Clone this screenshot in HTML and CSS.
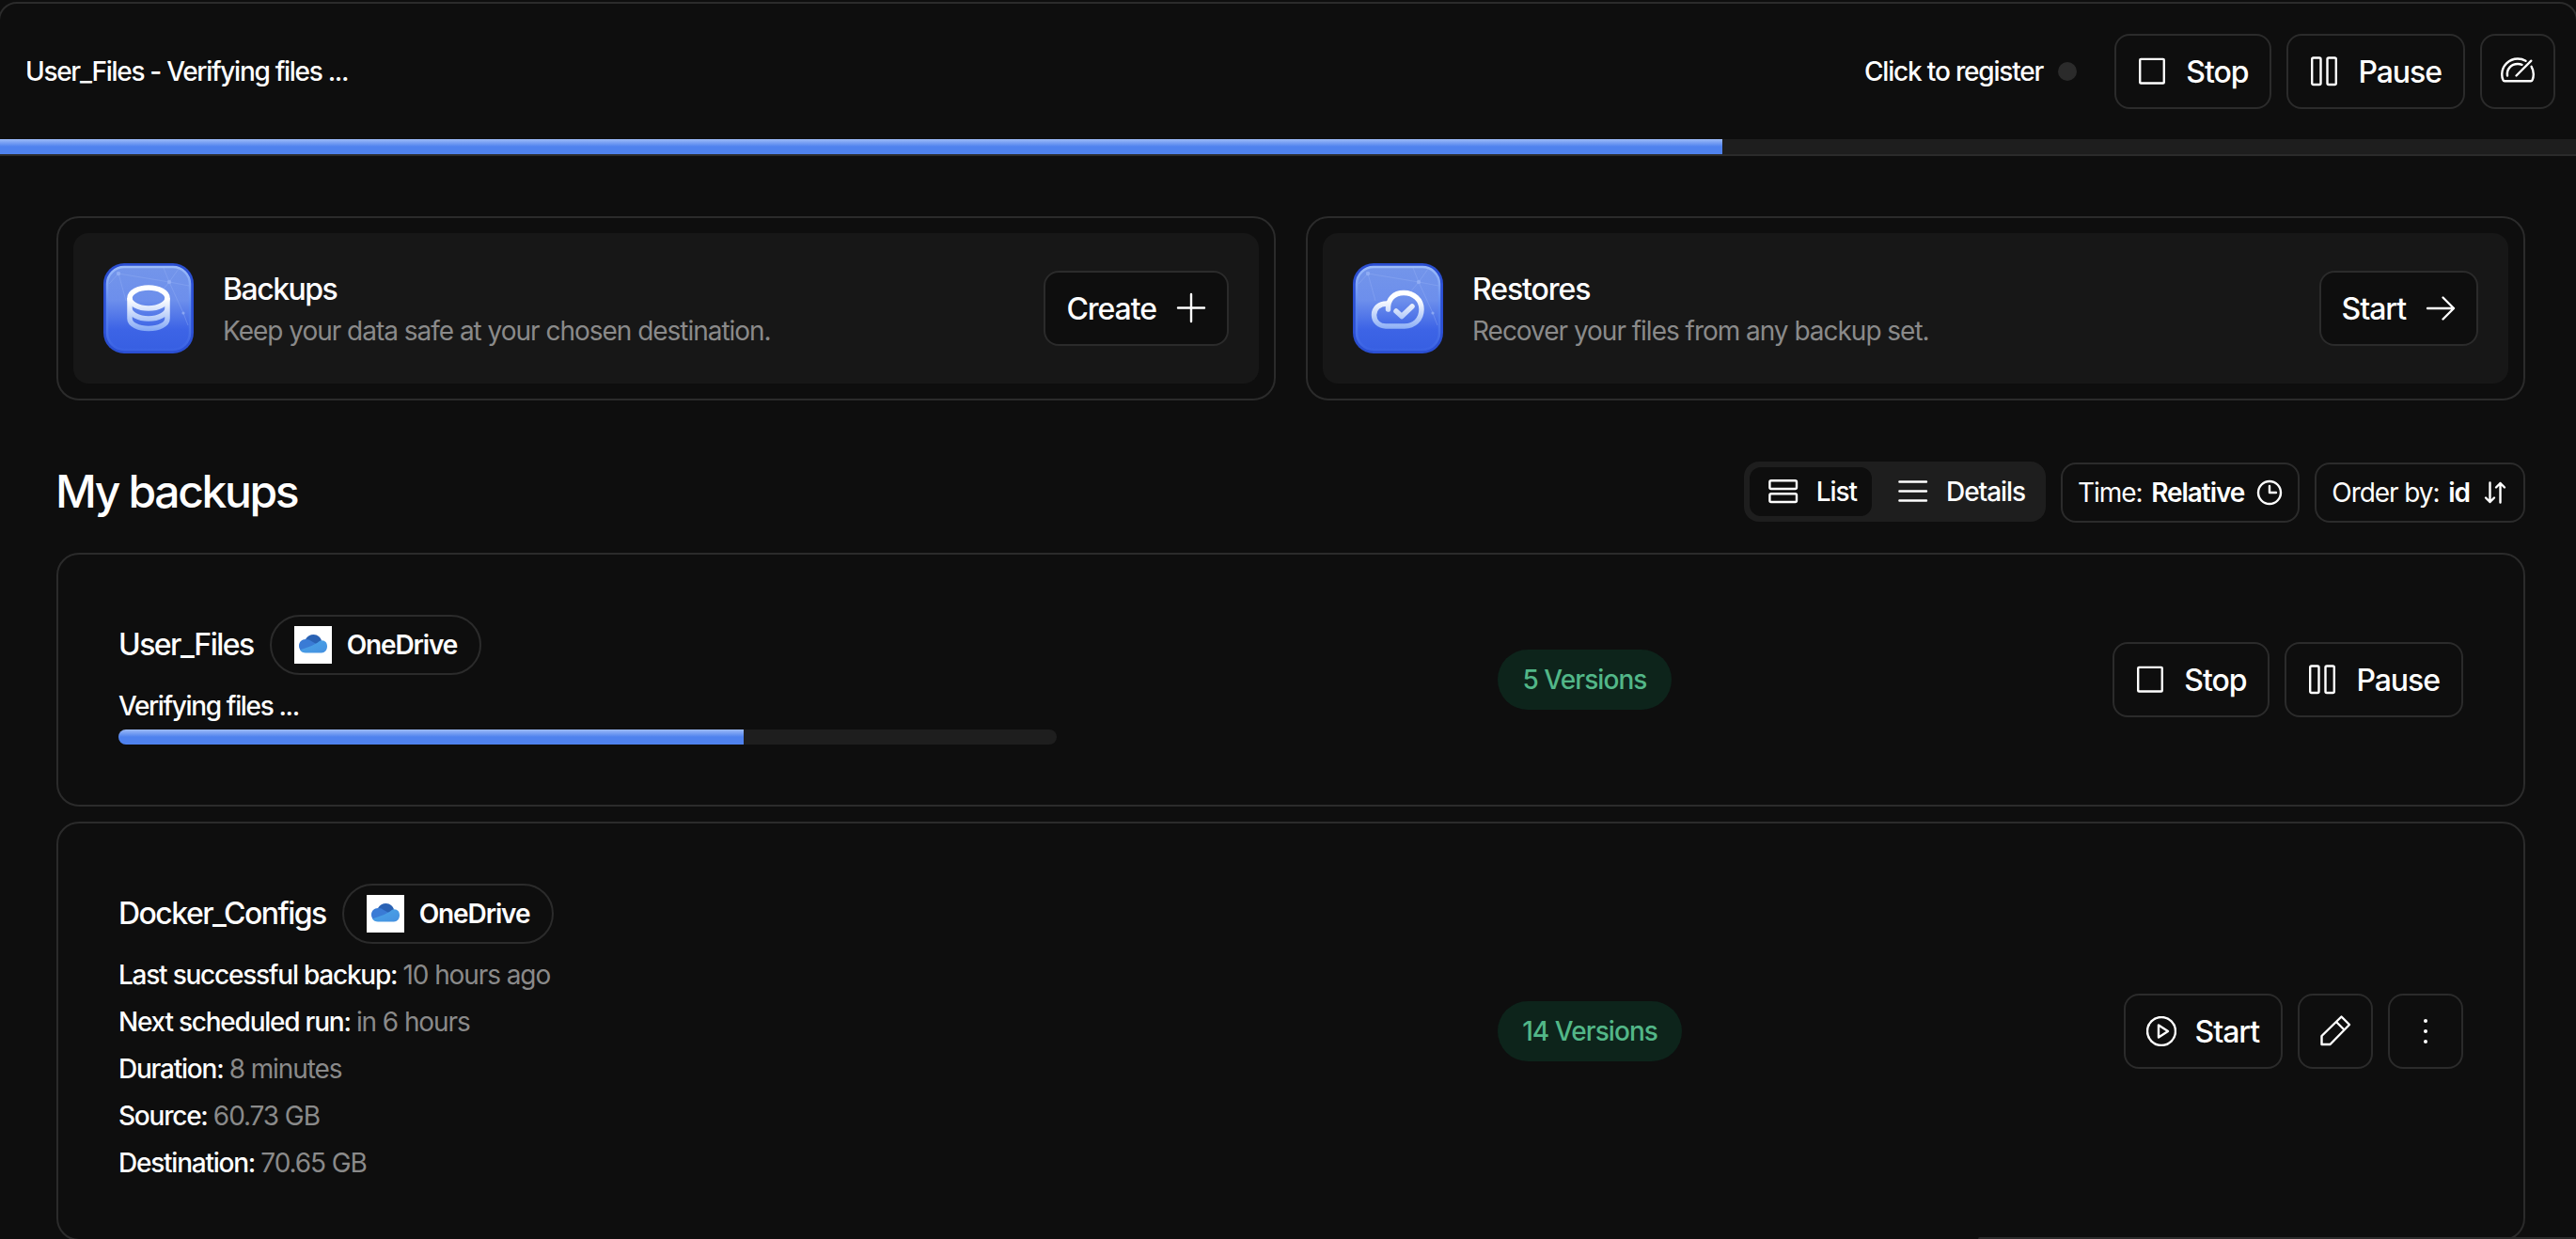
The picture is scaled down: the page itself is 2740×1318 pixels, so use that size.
FILE: index.html
```html
<!DOCTYPE html>
<html lang="en">

<head>
    <meta charset="utf-8">
    <title>Duplicati</title>
    <meta name="viewport" content="width=device-width, initial-scale=1">
    <link rel="stylesheet" href="styles.css">
</head>

<body>
    <!-- shared icons -->
    <svg class="sprite" width="0" height="0">
        <defs>
            <linearGradient id="tileBg" x1="0" y1="0" x2="0" y2="1">
                <stop offset="0" stop-color="#7395ea"/>
                <stop offset="0.4" stop-color="#6d8fec"/>
                <stop offset="0.75" stop-color="#3d64e6"/>
                <stop offset="1" stop-color="#375fe2"/>
            </linearGradient>
            <linearGradient id="tileRim" x1="0" y1="0" x2="0" y2="1">
                <stop offset="0" stop-color="#9cbcfa"/>
                <stop offset="0.5" stop-color="#5c86f0"/>
                <stop offset="1" stop-color="#3a62e4"/>
            </linearGradient>
            <linearGradient id="glyph" gradientUnits="userSpaceOnUse" x1="0" y1="30" x2="0" y2="72">
                <stop offset="0.2" stop-color="#fff"/>
                <stop offset="1" stop-color="#83a8f5"/>
            </linearGradient>
            <linearGradient id="odBase" x1="0" y1="0" x2="1" y2="1">
                <stop offset="0" stop-color="#4aa6e8"/>
                <stop offset="1" stop-color="#4590e0"/>
            </linearGradient>
        </defs>
        <symbol id="i-stop" viewBox="0 0 32 32">
            <rect x="3.200" y="2.900" width="25.600" height="25.600" rx="1"/>
        </symbol>
        <symbol id="i-pause" viewBox="0 0 32 32">
            <rect x="3.200" y="1.500" width="9.300" height="28.500" rx="1.500"/>
            <rect x="19.500" y="1.500" width="9.300" height="28.500" rx="1.500"/>
        </symbol>
        <symbol id="i-play" viewBox="0 0 32 32">
            <circle cx="16" cy="16" r="15"/>
            <path d="M13 9.500v13l10-6.500z"/>
        </symbol>
        <symbol id="tile" viewBox="0 0 96 96">
            <rect x="0" y="0" width="96" height="96" rx="22" fill="#2b4fd2"/>
            <rect x="4" y="4" width="88" height="88" rx="18" fill="url(#tileBg)" stroke="url(#tileRim)" stroke-width="2.500"/>
            <path d="M16 11L70 20L91 24M16 11L6 22M16 11L24 40M64 5L70 20L80 6M70 20L60 32M70 20L85 53L90 66" fill="none" stroke="#9ab5f7" stroke-width="1" opacity="0.35"/>
            <g fill="#9ab5f7" opacity="0.7">
                <circle cx="16" cy="11" r="2.200"/>
                <circle cx="70" cy="20" r="2.200"/>
                <circle cx="85" cy="53" r="1.600"/>
            </g>
        </symbol>
        <symbol id="onedrive" viewBox="0 0 40 40">
            <rect width="40" height="40" fill="#fff"/>
            <path d="M12 14C14 10.500 17 9 20.500 9C25 9 28 12 29 15.500L20 22z" fill="#2a62b4"/>
            <path d="M12 28C8 28 5 25 5 21C5 17 8 14 12 14C15 13.500 17 15 19 16.500L27 21L10 28z" fill="#3a7bd5"/>
            <path d="M18.500 21L25 17.500C26.500 16 28 15.300 29.500 15.300C33 15.500 35 18 35 21.500C35 25.500 32.500 28.500 29 28.500H12C9.500 28.500 7.500 27.500 6 25.500z" fill="url(#odBase)"/>
        </symbol>
    </svg>

    <header class="status-bar">
        <div class="status-row">
            <span class="status-text">User_Files - Verifying files ...</span>
            <div class="status-actions">
                <a class="register">Click to register <span class="dot"></span></a>
                <button class="btn"><svg class="icon"><use href="#i-stop"/></svg>Stop</button>
                <button class="btn"><svg class="icon"><use href="#i-pause"/></svg>Pause</button>
                <button class="btn btn-icon">
                    <svg class="icon gauge" viewBox="0 0 36 32"><path d="M26.500 4.800C24 3.300 21.200 2.500 18 2.500C8.700 2.500 1.200 10 1.200 19C1.200 21.300 1.700 23.600 2.500 25.300C2.800 26 3.300 26.200 4 26.200H32C32.700 26.200 33.200 26 33.500 25.300C34.300 23.600 34.800 21.300 34.800 19C34.800 16 34 13.200 32.600 10.800M7 20.500C6 13.500 11 8 18 8C19.700 8 21.200 8.300 22.500 8.800M16.500 20.500L32.300 4.700"/></svg>
                </button>
            </div>
        </div>
        <div class="progress">
            <div class="progress-fill" style="width: 66.87%"></div>
        </div>
    </header>

    <main>
        <section class="actions">
            <div class="action-card">
                <div class="action-inner">
                    <svg class="tile" viewBox="0 0 96 96">
                        <use href="#tile"/>
                        <g fill="none" stroke="url(#glyph)" stroke-width="5.500">
                            <ellipse cx="48" cy="37" rx="20" ry="11"/>
                            <path d="M28 37V59C28 65 37 69.500 48 69.500S68 65 68 59V37M28 48C28 54 37 59 48 59S68 54 68 48"/>
                        </g>
                    </svg>
                    <div class="action-text">
                        <h3>Backups</h3>
                        <p>Keep your data safe at your chosen destination.</p>
                    </div>
                    <button class="btn">Create<svg class="icon plus" viewBox="0 0 32 32"><path d="M17 1v29M3 15.500h28"/></svg></button>
                </div>
            </div>
            <div class="action-card">
                <div class="action-inner">
                    <svg class="tile" viewBox="0 0 96 96">
                        <use href="#tile"/>
                        <g fill="none" stroke="url(#glyph)" stroke-width="5.500" stroke-linecap="round" stroke-linejoin="round">
                            <path d="M37.500 49C37 38 44 31.500 54 31.500C65 31.500 73 39 73 49C73 60 65 67 55 67H35C28 67 22.500 62 22.500 55C22.500 48 28 43 36 43"/>
                            <path d="M46 51L52 56.500L63 46"/>
                        </g>
                    </svg>
                    <div class="action-text">
                        <h3 class="restores">Restores</h3>
                        <p>Recover your files from any backup set.</p>
                    </div>
                    <button class="btn">Start<svg class="icon arrow" viewBox="0 0 32 32"><path d="M3 16h28M19.500 4.500L31 16L19.500 27.500"/></svg></button>
                </div>
            </div>
        </section>

        <div class="list-header">
            <h1>My backups</h1>
            <div class="controls">
                <div class="segmented">
                    <button class="segment active"><svg class="icon" viewBox="0 0 32 32"><rect x="1.400" y="4.200" width="28.600" height="8.800" rx="1.500"/><rect x="1.400" y="18.200" width="28.600" height="8.800" rx="1.500"/></svg>List</button>
                    <button class="segment"><svg class="icon" viewBox="0 0 32 32"><path d="M1.400 5.500h28.600M1.400 15.500h28.600M1.400 25.500h28.600"/></svg>Details</button>
                </div>
                <button class="chip">Time: <b>Relative</b><svg class="icon clock" viewBox="0 0 28 28"><circle cx="14" cy="14" r="12"/><path d="M14 7v7h7"/></svg></button>
                <button class="chip">Order by: <b>id</b><svg class="icon sort" viewBox="0 0 24 24"><path d="M6.500 1.500v20.500M2 17.500l4.500 4.500l4.500-4.500M17.500 22.500V2M13 6.500l4.500-4.500l4.500 4.500"/></svg></button>
            </div>
        </div>

        <section class="backups">
            <article class="backup">
                <div class="backup-info">
                    <div class="backup-title">
                        <h2>User_Files</h2>
                        <span class="target"><svg class="logo"><use href="#onedrive"/></svg>OneDrive</span>
                    </div>
                    <div class="running">
                        <span>Verifying files ...</span>
                        <div class="progress">
                            <div class="progress-fill" style="width: 66.7%"></div>
                        </div>
                    </div>
                </div>
                <span class="versions">5 Versions</span>
                <div class="backup-actions">
                    <button class="btn"><svg class="icon"><use href="#i-stop"/></svg>Stop</button>
                    <button class="btn"><svg class="icon"><use href="#i-pause"/></svg>Pause</button>
                </div>
            </article>

            <article class="backup">
                <div class="backup-info">
                    <div class="backup-title">
                        <h2>Docker_Configs</h2>
                        <span class="target"><svg class="logo"><use href="#onedrive"/></svg>OneDrive</span>
                    </div>
                    <div>Last successful backup: <span class="muted">10 hours ago</span></div>
                    <div>Next scheduled run: <span class="muted">in 6 hours</span></div>
                    <div>Duration: <span class="muted">8 minutes</span></div>
                    <div>Source: <span class="muted">60.73 GB</span></div>
                    <div>Destination: <span class="muted">70.65 GB</span></div>
                </div>
                <span class="versions">14 Versions</span>
                <div class="backup-actions">
                    <button class="btn"><svg class="icon"><use href="#i-play"/></svg>Start</button>
                    <button class="btn btn-icon">
                        <svg class="icon" viewBox="0 0 32 32"><path d="M1.500 30v-9L22.500 0.500L31 9L10.500 30zM17 6L25.500 14.500"/></svg>
                    </button>
                    <button class="btn btn-icon">
                        <svg class="icon dots" viewBox="0 0 32 32"><circle cx="16" cy="5" r="2"/><circle cx="16" cy="16" r="2"/><circle cx="16" cy="27" r="2"/></svg>
                    </button>
                </div>
            </article>
        </section>
    </main>

    <div class="toast"></div>
</body>

</html>
```

FILE: styles.css
```css
* {
    box-sizing: border-box;
}

body {
    position: relative;
    margin: 0;
    padding-top: 2px;
    height: 1318px;
    overflow: hidden;
    background-color: #0e0e0e;
    color: #fff;
    font-family: Inter, "Liberation Sans", sans-serif;
    font-size: 28px;
    line-height: 34px;
    letter-spacing: -0.044em;
}

h1,
h2,
h3,
p {
    margin: 0;
    font-weight: 500;
}

button {
    font: inherit;
    letter-spacing: inherit;
    color: inherit;
    background: none;
    border: none;
    padding: 0;
    cursor: pointer;
}

.sprite {
    position: absolute;
}

.icon {
    width: 32px;
    height: 32px;
    flex-shrink: 0;
    overflow: visible;
    fill: none;
    stroke: #fff;
    stroke-width: 2.4;
    stroke-linejoin: round;
    stroke-linecap: round;
}

.btn {
    display: flex;
    align-items: center;
    gap: 20px;
    height: 80px;
    padding: 2px 23px 0 22px;
    border: 2px solid #2b2b2b;
    border-radius: 16px;
    background-color: #0e0e0e;
    font-size: 32px;
    font-weight: 500;
    letter-spacing: -0.033em;
    white-space: nowrap;
}

.btn .icon {
    margin-top: -2px;
}

.btn-icon {
    width: 80px;
    padding: 2px 0 0;
    justify-content: center;
}

.btn .gauge {
    width: 36px;
}

.muted {
    color: #8a8a8a;
}

/* Top status bar */

.status-bar {
    margin: 0 -2px;
    border: 2px solid #2b2b2b;
    border-radius: 20px 20px 0 0;
}

.status-row {
    display: flex;
    align-items: center;
    justify-content: space-between;
    padding: 32px 22px 32px 27px;
}

.status-text,
.register {
    font-weight: 500;
}

.status-text {
    letter-spacing: -0.0463em;
}

.status-actions {
    display: flex;
    align-items: center;
    gap: 16px;
}

.register {
    display: flex;
    align-items: center;
    gap: 16px;
    margin-right: 24px;
    letter-spacing: -0.042em;
}

.dot {
    width: 20px;
    height: 20px;
    border-radius: 50%;
    background-color: #2b2b2b;
}

.progress {
    height: 16px;
    border-radius: 8px;
    overflow: hidden;
    background-color: #1e1e1e;
}

.status-bar .progress {
    border-radius: 0;
}

.progress-fill {
    height: 100%;
    background: linear-gradient(#9dbbf8, #4f82ee 50%);
}

/* Backup / restore cards */

main {
    padding: 64px 54px 0 60px;
}

.actions {
    display: grid;
    grid-template-columns: 1fr 1fr;
    gap: 32px;
}

.action-card {
    padding: 16px;
    border: 2px solid #2b2b2b;
    border-radius: 24px;
}

.action-inner {
    display: flex;
    align-items: center;
    height: 160px;
    padding: 0 32px;
    border-radius: 16px;
    background-color: #171717;
}

.tile {
    width: 96px;
    height: 96px;
    margin-right: 31px;
}

.action-text {
    flex-grow: 1;
}

.action-text h3 {
    padding-top: 1px;
    font-size: 32px;
    line-height: 40px;
    letter-spacing: -0.0468em;
}

.action-text .restores {
    letter-spacing: -0.034em;
}

.action-text p {
    margin-top: 7px;
    font-weight: 400;
    letter-spacing: -0.0365em;
    color: #8a8a8a;
}

/* Heading and view controls */

.list-header {
    display: flex;
    align-items: center;
    justify-content: space-between;
    height: 64px;
    margin: 66px 0 32px;
}

.list-header h1 {
    margin: -2px 0 0 -1px;
    font-size: 48px;
    letter-spacing: -0.049em;
}

.controls {
    display: flex;
    align-items: flex-start;
    gap: 16px;
    letter-spacing: -0.038em;
}

.segmented {
    display: flex;
    align-items: center;
    gap: 8px;
    height: 64px;
    margin-top: -1px;
    padding: 6px;
    border-radius: 16px;
    background-color: #1e1e1e;
}

.segment {
    display: flex;
    align-items: center;
    gap: 19px;
    height: 52px;
    padding: 0 16px 0 20px;
    border-radius: 12px;
    font-weight: 500;
}

.segment.active {
    background-color: #0e0e0e;
}

.chip {
    display: flex;
    align-items: center;
    height: 64px;
    padding: 0 16px;
    border: 2px solid #2b2b2b;
    border-radius: 16px;
    font-weight: 400;
    white-space: pre;
}

.chip b {
    margin-left: 3px;
    font-weight: 600;
}

.clock {
    width: 28px;
    height: 28px;
    margin-left: 13px;
}

.sort {
    width: 24px;
    height: 24px;
    margin: 0 2px 0 15px;
}

/* Backup list */

.backups {
    display: flex;
    flex-direction: column;
    gap: 16px;
}

.backup {
    display: flex;
    align-items: center;
    justify-content: space-between;
    padding: 64px;
    border: 2px solid #2b2b2b;
    border-radius: 24px;
}

.backup-info {
    display: flex;
    flex-direction: column;
    gap: 16px;
    width: 40%;
    font-weight: 500;
}

.backup-info .muted {
    font-weight: 400;
    letter-spacing: -0.039em;
}

.backup-title {
    display: flex;
    align-items: center;
    gap: 17px;
}

.backup-title h2 {
    font-size: 32px;
    letter-spacing: -0.048em;
}

.target {
    display: flex;
    align-items: center;
    gap: 16px;
    height: 64px;
    padding: 0 24px;
    border: 2px solid #2b2b2b;
    border-radius: 32px;
    font-weight: 600;
    letter-spacing: -0.04em;
}

.logo {
    width: 40px;
    height: 40px;
}

.running {
    display: flex;
    flex-direction: column;
    gap: 8px;
    letter-spacing: -0.0487em;
}

.versions {
    height: 64px;
    padding: 0 26px;
    border-radius: 32px;
    background-color: #0d241b;
    color: #52b788;
    font-weight: 500;
    letter-spacing: -0.033em;
    line-height: 64px;
}

.backup-actions {
    display: flex;
    gap: 16px;
}

.dots {
    fill: #fff;
    stroke: none;
}

.toast {
    position: absolute;
    bottom: 0;
    right: 0;
    width: 636px;
    height: 2px;
    border-top: 2px solid #2b2b2b;
    border-radius: 16px 16px 0 0;
}
```
